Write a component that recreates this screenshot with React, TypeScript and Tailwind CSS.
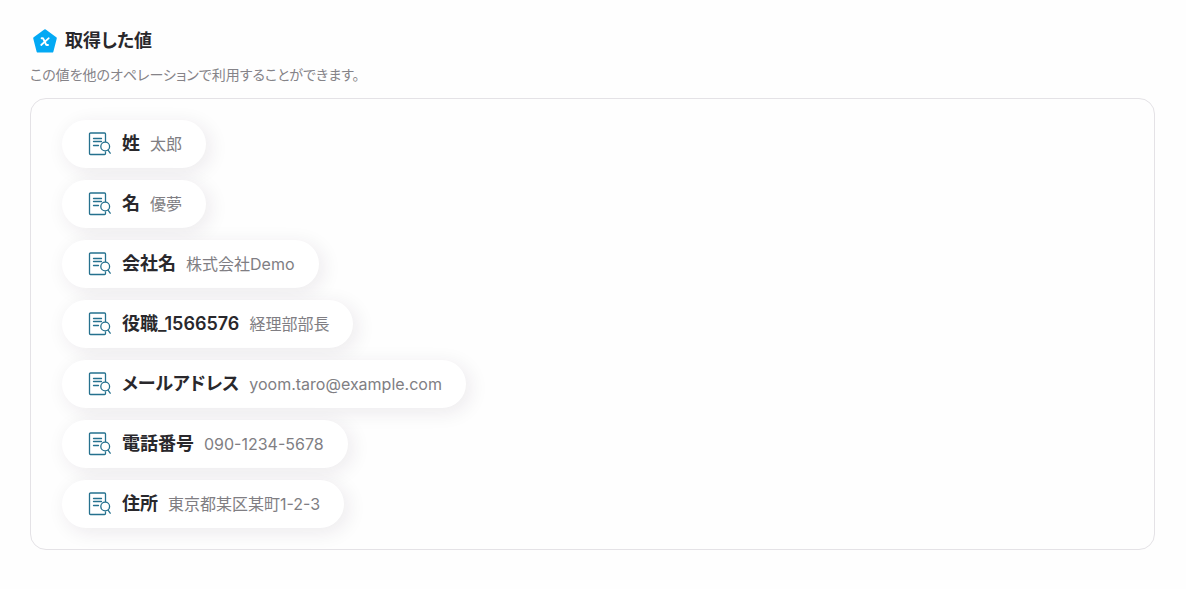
interface OutputValue {
  label: string;
  value: string;
}

const outputs: OutputValue[] = [
  { label: '姓', value: '太郎' },
  { label: '名', value: '優夢' },
  { label: '会社名', value: '株式会社Demo' },
  { label: '役職_1566576', value: '経理部部長' },
  { label: 'メールアドレス', value: 'yoom.taro@example.com' },
  { label: '電話番号', value: '090-1234-5678' },
  { label: '住所', value: '東京都某区某町1-2-3' },
];

function VariableIcon() {
  return (
    <svg className="w-6 h-6 shrink-0" viewBox="0 0 24 24" fill="none" aria-hidden="true">
      <path
        d="M12 1.6L22.6 9.2L19.2 22.4H4.8L1.4 9.2Z"
        fill="#03a9f4"
        stroke="#03a9f4"
        strokeWidth="2.4"
        strokeLinejoin="round"
      />
      <path
        d="M8.6 9.2h.8c.5 0 .8.2 1 .7l2.6 5.4c.2.5.5.7 1 .7h1"
        stroke="#fff"
        strokeWidth="1.9"
        strokeLinecap="round"
        strokeLinejoin="round"
      />
      <path d="M15.8 9.2L8.2 16" stroke="#fff" strokeWidth="1.7" strokeLinecap="round" />
    </svg>
  );
}

function DocumentSearchIcon() {
  return (
    <svg
      className="w-6 h-6 shrink-0"
      viewBox="0 0 24 24"
      fill="none"
      stroke="#25718e"
      strokeWidth="1.3"
      strokeLinecap="round"
      strokeLinejoin="round"
      aria-hidden="true"
    >
      <path d="M17.5 10V2a1 1 0 0 0-1-1h-14a1 1 0 0 0-1 1v19.5a1 1 0 0 0 1 1h14a1 1 0 0 0 1-1V20" />
      <path d="M5.5 6.5h8M5.5 9.5h8M5.5 13.5h5" />
      <circle cx="17.2" cy="14.5" r="4.4" fill="#fff" />
      <path d="M20 18.2l2.2 3" />
    </svg>
  );
}

function ValueChip({ label, value }: OutputValue) {
  return (
    <li className="flex items-center h-12 pl-[26px] pr-6 rounded-full bg-white shadow-[4px_4px_20px_rgba(40,20,60,0.09)]">
      <DocumentSearchIcon />
      <span className="ml-[10px] text-[18px] leading-6 font-semibold text-[#29282c]">{label}</span>
      <span className="ml-[10px] text-[16px] leading-6 text-[#807e83]">{value}</span>
    </li>
  );
}

export default function App() {
  return (
    <main className="min-h-screen bg-[#fefefe] pl-[30px] pr-[31px] pt-[29px] pb-10 font-['Inter','Noto_Sans_CJK_JP',sans-serif] [font-feature-settings:'palt']">
      <header>
        <div className="flex items-center gap-2 pl-[3px]">
          <VariableIcon />
          <h1 className="text-[18px] leading-6 font-semibold text-[#29282c]">取得した値</h1>
        </div>
        <p className="mt-3 text-[14px] leading-5 text-[#858388]">
          この値を他のオペレーションで利用することができます。
        </p>
      </header>

      <section className="mt-[13px] rounded-2xl border border-[#e4e2e6] px-[31px] py-[21px]">
        <ul className="flex flex-col items-start gap-3">
          {outputs.map((output) => (
            <ValueChip key={output.label} label={output.label} value={output.value} />
          ))}
        </ul>
      </section>
    </main>
  );
}
